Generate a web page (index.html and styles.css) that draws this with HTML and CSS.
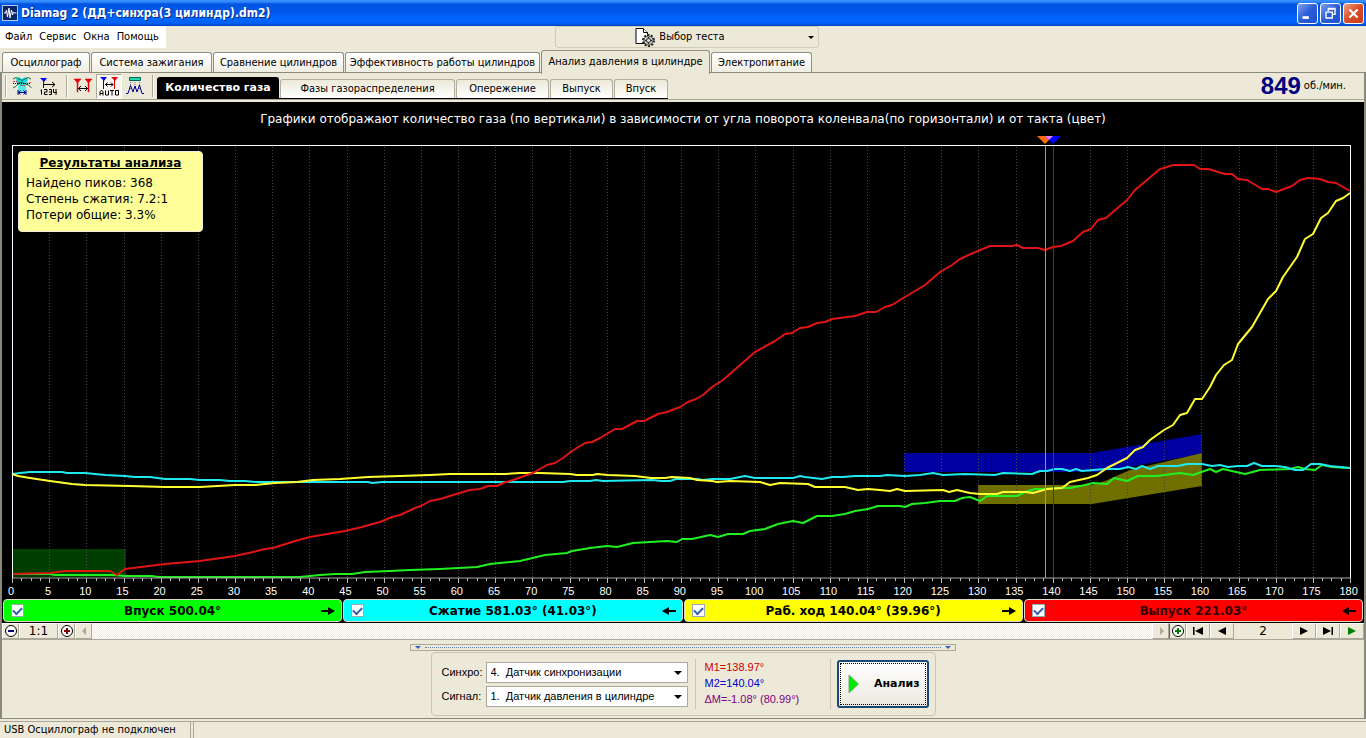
FILE: index.html
```html
<!DOCTYPE html>
<html lang="ru">
<head>
<meta charset="utf-8">
<title>Diamag 2 (ДД+синхра(3 цилиндр).dm2)</title>
<link rel="stylesheet" href="styles.css">
</head>
<body>
<header class="titlebar">
  <svg class="app-icon" viewBox="0 0 16 16" width="16" height="16"><rect x=".5" y=".5" width="15" height="15" fill="#0a246a" stroke="#b8c8e8"/><path d="M2 8h1.500l1-3 1 7 1.500-9 1 10 1.500-8 1 5 1-3 1 1h2" fill="none" stroke="#fff"/></svg>
  <h1 class="title">Diamag 2 (ДД+синхра(3 цилиндр).dm2)</h1>
  <div class="win-buttons">
    <button class="win-btn" aria-label="Свернуть"><svg viewBox="0 0 21 21"><path d="M5 15h7" stroke="#fff" stroke-width="3"/></svg></button>
    <button class="win-btn" aria-label="Восстановить"><svg viewBox="0 0 21 21"><path d="M8 8V5.500h7.500v6H13M7.500 5h8.500" fill="none" stroke="#fff" stroke-width="1.500"/><path d="M5.500 9h7v6.500h-7zM5 9h8" fill="none" stroke="#fff" stroke-width="1.500"/></svg></button>
    <button class="win-btn close" aria-label="Закрыть"><svg viewBox="0 0 21 21"><path d="M6 6l9 9M15 6l-9 9" stroke="#fff" stroke-width="2.400"/></svg></button>
  </div>
</header>
<div class="menu-row">
  <nav class="menubar"><button>Файл</button><button>Сервис</button><button>Окна</button><button>Помощь</button></nav>
  <button class="test-select">
    <svg viewBox="0 0 20 20" width="20" height="20"><path d="M1 1.500h7.500l4 4v11H1z" fill="#fff" stroke="#000"/><path d="M8.500 1.500v4h4" fill="#fff" stroke="#000"/><circle cx="13.500" cy="13.500" r="5.500" fill="none" stroke="#222" stroke-width="2" stroke-dasharray="2 1.450"/><circle cx="13.500" cy="13.500" r="4.500" fill="#c4c8c0" stroke="#444"/><path d="M13.500 10v7M10 13.500h7" stroke="#222"/><circle cx="13.500" cy="13.500" r="2" fill="#e8ece4" stroke="#222"/></svg>
    <span>Выбор теста</span><i class="caret"></i>
  </button>
</div>
<nav class="main-tabs">
  <button class="tab w1">Осциллограф</button><button class="tab w2">Система зажигания</button><button class="tab w3">Сравнение цилиндров</button><button class="tab w4">Эффективность работы цилиндров</button><button class="tab w5 active">Анализ давления в цилиндре</button><button class="tab w6">Электропитание</button>
</nav>
<main class="page">
  <div class="toolbar">
    <i class="sep"></i>
    <button class="tool" aria-label="Зоны"><svg viewBox="0 0 22 22"><path d="M5 4l3-2 3 2 3-2 3 2-1 5-3 2H9L6 9z" fill="#20d8d8"/><path d="M2 4q3-3 6 0t6 0 6 0M2 13q3-1 5-4t8 0 5 4" fill="none" stroke="#087050"/><path d="M2 7q4-2 7 2t11-2" fill="none" stroke="#d02020" stroke-dasharray="2 1"/><path d="M2 8.500h18" stroke="#000" stroke-dasharray="1 1"/><path d="M7 11h8v6H7z" fill="#58e8e8"/><path d="M7 15v5M15 15v5M7 17.500h8M9.500 15.500l-2 2 2 2M12.500 15.500l2 2-2 2" fill="none" stroke="#00008c"/></svg></button>
    <button class="tool gap" aria-label="Нумерация"><svg viewBox="0 0 22 22"><path d="M3 3h7L7 7zM6 5h1v8H6z" fill="#0000e8"/><path d="M7 9.500h11M15 7l3 2.500-3 2.500" fill="none" stroke="#000"/><path d="M4.500 14.500v5M3.500 15.500h1M7 14.500h3v2.500H7.500v2.500h3M12 14.500h2.500v5H12m0-2.500h2.500M16.500 14v3.500h3.500m-1-3.500v6" fill="none" stroke="#000"/></svg></button>
    <i class="sep"></i>
    <button class="tool" aria-label="Маркеры"><svg viewBox="0 0 22 22"><path d="M2 4h7L5.500 8zM13 4h7l-3.500 4zM5 6h1v11H5zM16 6h1v11h-1z" fill="#e80000" stroke="#e80000" stroke-width=".5"/><path d="M6 13.500h10M9 11l-2.500 2.500L9 16M13 11l2.500 2.500L13 16" fill="none" stroke="#000"/></svg></button>
    <button class="tool pressed" aria-label="Авто"><svg viewBox="0 0 22 22"><path d="M2 2h7L6 6zM5 5h1v9H5z" fill="#0000e8"/><path d="M13 2h7l-3 4zM16 5h1v9h-1z" fill="#e80000"/><path d="M7 9.500h8M9.500 7.500l-2 2 2 2M13 7.500l2 2-2 2M2 20.500v-4l1.500-1 1.500 1v4M2 18.500h3M7.500 15.500v4.500h3v-4.500M12 15.500h4M14 15.500v5M17.500 15.500h3v4.500h-3z" fill="none" stroke="#000"/></svg></button>
    <button class="tool" aria-label="Спектр"><svg viewBox="0 0 22 22"><path d="M5.500 2.500h11v3h-11z" fill="#20d8b8" stroke="#065"/><path d="M6.500 7v7M11 7v7M15.500 7v7" stroke="#777" stroke-dasharray="1 1"/><path d="M2 18.500h2l2.500-8L9 17l2-6 2 6 2.500-7 2.500 8.500h2" fill="none" stroke="#00008c"/></svg></button>
    <i class="sep last"></i>
    <nav class="sub-tabs">
      <button class="subtab s1 active">Количество газа</button><button class="subtab s2">Фазы газораспределения</button><button class="subtab s3">Опережение</button><button class="subtab s4">Выпуск</button><button class="subtab s5">Впуск</button>
    </nav>
    <p class="rpm"><b>849</b> об./мин.</p>
  </div>
  <section class="chart">
    <h2 class="chart-title">Графики отображают количество газа (по вертикали) в зависимости от угла поворота коленвала(по горизонтали) и от такта (цвет)</h2>
    <div class="plot">
      <svg id="plot" viewBox="12 145 1338 433" preserveAspectRatio="none">
        <path fill="#003e00" d="M12 549H126V577H12z"/>
        <path fill="#0000a0" d="M904 453H1092L1202 434V454L1100 472H904z"/>
        <path fill="#707000" d="M978 485H1092L1105 481 1130 470 1202 453V486L1092 504H978z"/>
        <g id="grid" class="grid"></g>
        <g id="series" class="series"></g>
        <path class="cursor orange" d="M1045.500 145V578"/><path class="cursor blue" d="M1053.500 145V578"/>
        <path class="axis" d="M12 578H1350"/>
        <path class="frame" d="M12.500 578V145.500H1350.500V578"/>
        <g id="ticks" class="ticks"></g>
        <path fill="#ff6a10" d="M1037 136h16l-8 8z"/><path fill="#0000ff" d="M1045 136h16l-8 8z"/><path fill="#e878ff" d="M1045 136h8l-4 4z"/>
      </svg>
      <aside class="results"><h3>Результаты анализа</h3><p>Найдено пиков: 368</p><p>Степень сжатия: 7.2:1</p><p>Потери общие: 3.3%</p></aside>
    </div>
    <div class="axis-labels" id="labels"></div>
    <div class="legend">
      <label class="leg green"><input type="checkbox" checked><span>Впуск 500.04°</span><svg viewBox="0 0 14 10"><path d="M0 4h7V1l7 4-7 4V6H0z"/></svg></label>
      <label class="leg cyan"><input type="checkbox" checked><span>Сжатие 581.03° (41.03°)</span><svg viewBox="0 0 14 10"><path d="M14 4H7V1L0 5l7 4V6h7z"/></svg></label>
      <label class="leg yellow"><input type="checkbox" checked><span>Раб. ход 140.04° (39.96°)</span><svg viewBox="0 0 14 10"><path d="M0 4h7V1l7 4-7 4V6H0z"/></svg></label>
      <label class="leg red"><input type="checkbox" checked><span>Выпуск 221.03°</span><svg viewBox="0 0 14 10"><path d="M14 4H7V1L0 5l7 4V6h7z"/></svg></label>
    </div>
  </section>
  <div class="scroll-row">
    <button class="sb z" aria-label="Уменьшить"><svg viewBox="0 0 16 16"><circle cx="8" cy="8" r="5.500" fill="#fff" stroke="#000"/><path d="M5 8h6" stroke="#00007c" stroke-width="2"/></svg></button>
    <button class="sb scale">1:1</button>
    <button class="sb z" aria-label="Увеличить"><svg viewBox="0 0 16 16"><circle cx="8" cy="8" r="5.500" fill="#fff" stroke="#000"/><path d="M5 8h6M8 5v6" stroke="#800000" stroke-width="2"/></svg></button>
    <button class="sb z" aria-label="Влево"><svg viewBox="0 0 16 16"><path d="M10 4v8L6 8z" fill="#aca899"/></svg></button>
    <div class="track"></div>
    <button class="sb z" aria-label="Вправо"><svg viewBox="0 0 16 16"><path d="M7 4v8l4-4z" fill="#aca899"/></svg></button>
    <button class="sb z focus" aria-label="Добавить"><svg viewBox="0 0 16 16"><circle cx="8" cy="8" r="5.500" fill="#fff" stroke="#000"/><path d="M5 8h6M8 5v6" stroke="#007800" stroke-width="2"/></svg></button>
    <button class="sb n" aria-label="Первый"><svg viewBox="0 0 16 16"><path d="M3 4h1.500v8H3zM13 4v8L5 8z"/></svg></button>
    <button class="sb n" aria-label="Предыдущий"><svg viewBox="0 0 16 16"><path d="M12 4v8L4 8z"/></svg></button>
    <output class="page-no">2</output>
    <button class="sb n" aria-label="Следующий"><svg viewBox="0 0 16 16"><path d="M4 4v8l8-4z"/></svg></button>
    <button class="sb n" aria-label="Последний"><svg viewBox="0 0 16 16"><path d="M3 4v8l8-4zM11.500 4H13v8h-1.500z"/></svg></button>
    <button class="sb n" aria-label="Пуск"><svg viewBox="0 0 16 16"><path d="M4 4v8l8-4z" fill="#008000"/></svg></button>
  </div>
  <div class="splitter"><i></i><b></b><i></i></div>
  <form class="controls">
    <div class="fields">
      <label for="sync">Синхро:</label><span class="pick"><select id="sync"><option>4.&nbsp; Датчик синхронизации</option></select></span>
      <label for="sig">Сигнал:</label><span class="pick"><select id="sig"><option>1.&nbsp; Датчик давления в цилиндре</option></select></span>
    </div>
    <div class="marks"><p class="m1">M1=138.97°</p><p class="m2">M2=140.04°</p><p class="dm">ΔM=-1.08° (80.99°)</p></div>
    <button class="run" type="button"><svg viewBox="0 0 12 20" width="12" height="20"><path d="M1 1l9.500 9L1 19z" fill="#00e800" stroke="#70b070"/></svg><span>Анализ</span></button>
  </form>
</main>
<footer class="status"><span>USB Осциллограф не подключен</span><span class="rest"></span></footer>
<script src="plot.js"></script>
</body>
</html>
```
FILE: styles.css
```css
* { box-sizing: border-box; }
body { margin: 0; height: 100vh; display: flex; flex-direction: column; background: #ece9d8; color: #000; font: 11px/14px "DejaVu Sans Condensed", "DejaVu Sans", sans-serif; overflow: hidden; }
button { font: inherit; color: inherit; margin: 0; padding: 0; border: 0; background: none; }
h1, h2, h3, p { margin: 0; font-size: inherit; }
svg { display: block; }

.titlebar { height: 26px; flex: none; display: flex; align-items: center; gap: 3px; padding: 0 2px; background: linear-gradient(#3a90ff 0, #3088f8 2px, #0054e3 4px, #0058ea 12px, #0066ff 18px, #0062f8 23px, #0040c0 26px); color: #fff; }
.title { flex: 1; font: bold 12px/18px "DejaVu Sans Condensed", "DejaVu Sans", sans-serif; text-shadow: 1px 1px #0a2a80; }
.win-buttons { display: flex; gap: 2px; }
.win-btn { width: 21px; height: 21px; border: 1px solid #fff; border-radius: 3px; background: linear-gradient(135deg, #7da2f0, #2a5cd8 50%, #2050d0); }
.win-btn.close { background: linear-gradient(135deg, #f0a080, #d84c28 50%, #c83c18); }

.menu-row { height: 24px; flex: none; display: grid; grid-template-columns: 555fr 264fr 547fr; }
.menubar { width: 166px; height: 22px; padding-left: 5px; display: flex; gap: 7px; background: #fff; }
.test-select { height: 22px; display: flex; align-items: center; justify-content: center; gap: 4px; position: relative; padding-right: 14px; border: 1px solid #cfccb8; border-radius: 3px; }
.caret { position: absolute; right: 4px; border: 3px solid transparent; border-top-color: #000; border-bottom: 0; }

.main-tabs { height: 22px; flex: none; display: flex; align-items: flex-end; padding-left: 2px; gap: 1px; }
.tab { height: 20px; border: 1px solid #8f8f85; border-bottom: 0; border-radius: 3px 3px 0 0; background: linear-gradient(#fff, #f0eee2); white-space: nowrap; }
.w1 { width: 88px; } .w2 { width: 121px; } .w3 { width: 131px; } .w4 { width: 195px; } .w5 { width: 169px; } .w6 { width: 101px; }
.tab.active { height: 24px; margin-bottom: -2px; padding-bottom: 2px; background: #ece9d8; position: relative; }

.page { flex: 1; min-height: 0; display: flex; flex-direction: column; border: 1px solid #8a897e; border-left-width: 2px; border-right-width: 2px; margin-bottom: 2px; }
.toolbar { height: 27px; flex: none; display: flex; align-items: center; padding-left: 3px; border-bottom: 1px solid #aca899; }
.sep { width: 2px; height: 22px; border-left: 1px solid #aca899; border-right: 1px solid #fff; margin-right: 2px; }
.tool { width: 26px; height: 25px; display: grid; place-items: center; }
.tool svg { width: 22px; height: 22px; }
.tool.gap { margin-right: 5px; }
.tool.pressed { background: #f8f7f1; border: 1px solid #aca899; border-right-color: #fff; border-bottom-color: #fff; }
.sep.last { margin: 0 3px 0 4px; }
.sub-tabs { display: flex; align-self: flex-end; border-bottom: 1px solid #000; align-items: flex-end; gap: 1px; }
.subtab { height: 19px; border: 1px solid #b0ae9c; border-bottom: 0; border-radius: 3px 3px 0 0; background: linear-gradient(#ece9d8, #fff); }
.subtab.active { height: 21px; background: #000; color: #fff; border-color: #000; font: bold 11px/14px "DejaVu Sans", sans-serif; }
.s1 { width: 122px; } .s2 { width: 175px; } .s3 { width: 93px; } .s4 { width: 63px; } .s5 { width: 54px; }
.rpm { margin-left: auto; padding-right: 18px; display: flex; align-items: center; gap: 3px; }
.rpm b { font: bold 24px/24px "Liberation Sans", Arial, sans-serif; color: #000080; }

.chart { flex: 1; min-height: 0; margin-top: 2px; padding: 0 1px; background: #000; color: #fff; display: flex; flex-direction: column; }
.chart-title { height: 43px; flex: none; padding-top: 9px; text-align: center; font: 12px/16px "DejaVu Sans", sans-serif; white-space: nowrap; }
.plot { flex: 1; min-height: 0; margin: 0 13px 0 9px; position: relative; }
.plot > svg { width: 100%; height: 100%; overflow: visible; }
.grid { stroke: #484848; stroke-dasharray: 1 2; shape-rendering: crispEdges; }
.ticks { stroke: #b8b8b8; shape-rendering: crispEdges; }
.frame { fill: none; stroke: #fff; shape-rendering: crispEdges; }
.axis { stroke: #a8a8a8; }
.cursor { shape-rendering: crispEdges; }
.cursor.orange { stroke: #ff7838; } .cursor.blue { stroke: #2828e8; }
.series { fill: none; stroke-width: 2; stroke-linejoin: round; }
.results { position: absolute; left: 6px; top: 6px; width: 185px; height: 81px; padding: 3px 7px; background: #ffff99; border: 1px solid #f0ece0; border-radius: 4px; color: #000; font: 12px/16px "DejaVu Sans", sans-serif; }
.results h3 { font-weight: bold; font-size: 12px; text-decoration: underline; text-align: center; margin-bottom: 4px; white-space: nowrap; }
.axis-labels { height: 21px; flex: none; display: flex; justify-content: space-between; margin: 0 14px 0 8px; padding-top: 6px; font: 11px/14px "Liberation Sans", Arial, sans-serif; }
.axis-labels span { width: 0; display: flex; justify-content: center; }
.legend { height: 24px; flex: none; display: grid; grid-template-columns: repeat(4, 1fr); gap: 1px; }
.leg { display: flex; align-items: center; height: 23px; border: 1px solid #ded8c8; border-radius: 4px; padding: 0 6px 0 7px; color: #000; font: bold 12px/16px "DejaVu Sans", sans-serif; }
.leg span { flex: 1; text-align: center; white-space: nowrap; }
.leg svg { width: 14px; height: 10px; }
.leg input { appearance: none; margin: 0; width: 13px; height: 13px; background: #fff; border: 1px solid #9aa8b8; display: grid; place-items: center; }
.leg input:checked::after { content: ""; width: 7px; height: 4px; border: solid #3060b0; border-width: 0 0 2px 2px; transform: translateY(-1px) rotate(-45deg); }
.green { background: #0f0; } .cyan { background: #0ff; } .yellow { background: #ff0; } .red { background: #f00; }
.leg.red { color: #300000; }

.scroll-row { height: 17px; flex: none; display: flex; border-bottom: 1px solid #aca899; }
.sb { border: 1px solid #fff; border-right-color: #aca899; border-bottom-color: #aca899; background: #ece9d8; display: grid; place-items: center; }
.sb svg { width: 16px; height: 16px; margin: -1px; }
.z { width: 17px; } .n { width: 24px; }
.scale { width: 39px; font: 12px/14px "DejaVu Sans", sans-serif; }
.track { flex: 1; background: repeating-conic-gradient(#fff 0 25%, #f0ede0 0 50%) 0 0 / 2px 2px; }
.focus { border-left: 1px solid #3060c0; }
.page-no { width: 58px; text-align: center; font: 12px/17px "DejaVu Sans", sans-serif; }

.splitter { width: 546px; height: 7px; flex: none; margin: 4px auto 0; display: flex; align-items: center; gap: 4px; padding: 0 4px; border: 1px solid #aca899; }
.splitter b { flex: 1; border-top: 1px dotted #6080b0; }
.splitter i { border: 3px solid transparent; border-top-color: #3060c0; border-bottom: 0; }
.controls { width: 505px; height: 64px; flex: none; margin: 1px auto 2px; display: flex; align-items: center; border: 1px solid #cac7b4; border-radius: 4px; padding: 0 6px 0 10px; font: 11px/14px "Liberation Sans", Arial, sans-serif; }
.fields { display: grid; grid-template-columns: 44px 202px; row-gap: 3px; align-items: center; }
.pick { position: relative; }
.pick::after { content: ""; position: absolute; right: 6px; top: 9px; border: 4px solid transparent; border-top-color: #000; border-bottom: 0; pointer-events: none; }
.pick select { appearance: none; display: block; width: 100%; height: 21px; margin: 0; padding: 0 4px; border: 1px solid #aca899; border-radius: 0; background: #fff; color: #000; font: inherit; }
.marks { margin-left: 7px; width: 137px; height: 50px; padding-left: 9px; border: solid #cac7b4; border-width: 0 1px; line-height: 16px; }
.m1 { color: #d00000; } .m2 { color: #0000d0; } .dm { color: #800080; }
.run { margin-left: 6px; width: 92px; height: 48px; display: flex; align-items: center; gap: 14px; padding-left: 9px; border: 2px solid #1c4878; border-radius: 3px; background: linear-gradient(#fff, #ece9e0); outline: 1px dotted #000; outline-offset: -4px; font: bold 11px/14px "DejaVu Sans", sans-serif; }

.status { height: 17px; flex: none; display: flex; gap: 2px; border-top: 1px solid #aca899; }
.status span { width: 191px; padding-left: 4px; border-right: 1px solid #aca899; white-space: nowrap; line-height: 15px; }
.status .rest { flex: 1; border-left: 1px solid #aca899; border-right: 0; }
```
FILE: plot.js
```js
const NS = "http://www.w3.org/2000/svg";
const X0 = 12, X1 = 1350, BASE = 578;

const series = [
  ["#20f020", "12,574 50,574 55,575 115,575 125,576 152,576 158,577 280,577 300,577 320,575 335,574 352,574 365,572 390,571 410,570 440,569 477,567 490,564 520,561 545,555 567,553 572,551 590,548 607,546 617,547 633,543 667,541 677,542 682,539 692,539 710,535 718,537 728,534 743,534 750,531 765,529 778,524 793,521 803,523 817,516 832,516 845,514 855,511 868,509 878,506 900,506 905,507 912,504 925,503 940,501 955,501 962,498 970,497 980,501 987,496 1017,496 1025,492 1035,489 1045,489 1060,488 1070,488 1085,485 1093,483 1107,484 1114,478 1127,481 1138,476 1157,476 1180,473 1193,475 1210,469 1216,472 1223,469 1245,474 1260,470 1290,469 1298,467 1305,469 1315,470 1322,465 1332,467 1350,468"],
  ["#20e8f0", "12,474 20,473 30,472 62,472 67,473 85,473 105,475 125,476 135,477 150,477 165,479 190,479 200,480 220,480 230,481 245,481 255,482 368,482 372,483 382,482 563,482 570,481 590,481 596,480 603,481 652,480 662,481 670,481 676,479 697,479 703,480 712,479 730,479 745,476 755,478 793,478 800,476 805,477 822,479 832,477 843,477 855,476 880,476 887,475 905,476 920,475 933,473 943,475 965,474 995,475 1003,473 1032,474 1040,471 1047,471 1055,469 1062,469 1070,471 1076,469 1082,471 1105,469 1120,469 1128,467 1136,469 1142,466 1150,469 1158,466 1178,466 1187,464 1202,464 1212,466 1220,465 1228,467 1238,466 1247,466 1254,463 1262,466 1275,466 1285,467 1295,470 1303,470 1311,464 1320,464 1330,466 1340,467 1350,468"],
  ["#ffff30", "12,474 18,476 30,478 50,481 72,484 85,485 130,486 165,487 200,487 235,485 255,485 275,483 297,482 313,480 340,479 368,477 400,476 430,475 450,474 505,474 520,473 540,473 570,474 577,475 593,475 597,474 608,475 635,476 651,478 665,478 672,477 690,478 697,480 712,481 717,482 730,481 760,482 770,485 780,483 808,484 815,487 845,487 858,490 868,489 880,490 890,491 897,489 905,491 943,490 949,492 957,490 970,493 980,494 997,494 1003,492 1025,492 1033,493 1047,489 1062,488 1070,482 1088,478 1097,475 1107,468 1127,458 1135,450 1143,447 1150,440 1164,430 1173,425 1180,415 1187,413 1195,399 1202,399 1210,387 1216,375 1224,365 1232,360 1238,344 1252,327 1260,313 1268,299 1276,291 1283,277 1297,257 1305,239 1313,234 1321,218 1328,213 1336,201 1343,198 1350,193"],
  ["#e01414", "12,574 50,573 65,571 82,571 110,571 117,575 125,569 165,564 200,561 235,556 253,552 265,549 273,548 295,541 310,537 333,533 345,531 362,527 380,522 392,517 400,515 415,508 421,506 430,501 440,499 453,495 470,490 480,489 488,486 497,486 503,483 513,480 527,475 533,473 547,465 555,463 563,458 572,451 585,443 592,442 600,438 615,429 622,429 637,421 644,421 658,414 667,412 680,407 688,402 696,399 703,395 712,387 723,380 755,352 775,341 785,334 792,333 800,328 808,327 817,323 825,322 832,319 855,316 867,312 876,312 885,307 892,305 900,300 925,285 940,272 952,265 960,259 973,253 978,251 990,246 1012,246 1017,245 1023,248 1038,248 1045,250 1053,247 1061,246 1073,241 1083,232 1091,229 1098,220 1106,218 1127,200 1135,190 1160,169 1164,168 1173,165 1194,165 1200,169 1208,169 1225,174 1232,174 1238,179 1247,180 1262,189 1268,189 1276,192 1292,186 1300,180 1308,178 1320,179 1328,182 1336,183 1343,187 1350,191"]
];

function draw(parent, tag, attrs) {
  const el = document.createElementNS(NS, tag);
  for (const key in attrs) el.setAttribute(key, attrs[key]);
  document.getElementById(parent).appendChild(el);
}

for (const [stroke, points] of series) draw("series", "polyline", { stroke, points });

for (let i = 0; i <= 144; i++) {
  const x = Math.round(X0 + (X1 - X0) * i / 144) + 0.5;
  const major = i % 4 === 0;
  draw("ticks", "path", { d: `M${x} ${BASE}v${major ? 5 : 3}` });
  if (!major) continue;
  if (i > 0 && i < 144) draw("grid", "path", { d: `M${x} 147V${BASE}` });
  const label = document.createElement("span");
  label.textContent = i / 4 * 5;
  document.getElementById("labels").appendChild(label);
}
```
